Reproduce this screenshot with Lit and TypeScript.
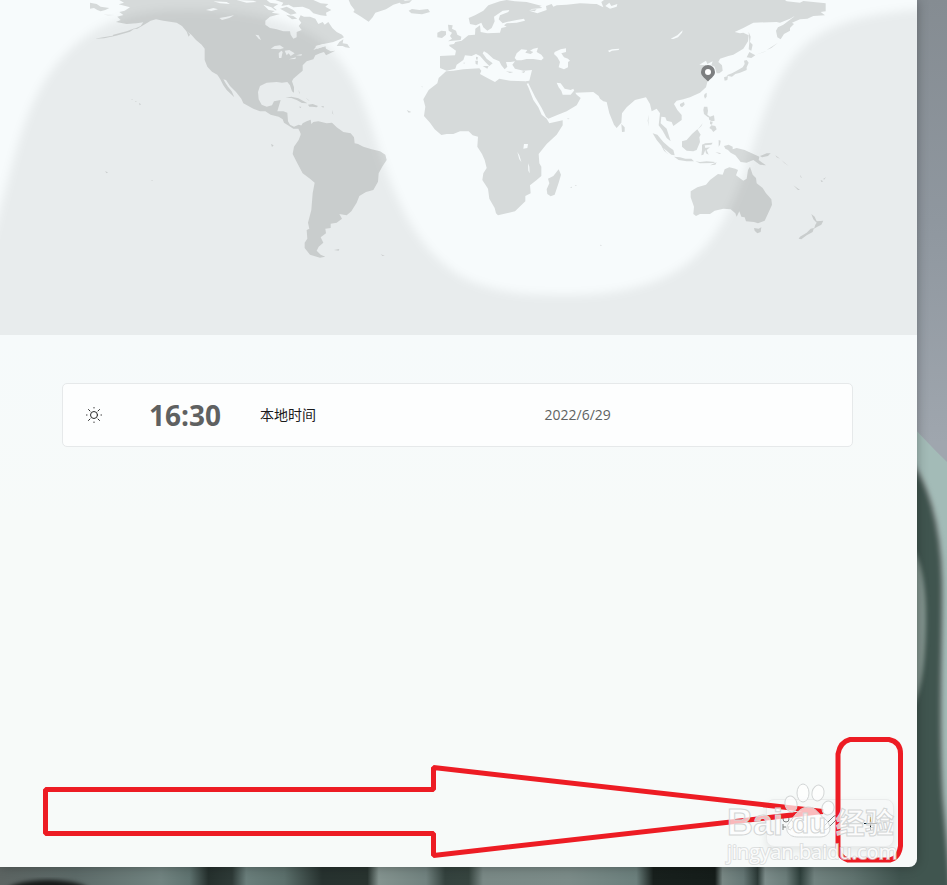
import { LitElement, html, css, svg } from "lit";
import { customElement, property } from "lit/decorators.js";

/* Coastlines of the western half, three units to a map pixel. */
const WEST = [
  // North America
  "M118 0 132 8 116 13 150 22 134 32 118 36 130 45 112 50 122 60 108 66 140 72 170 70 190 67 182 78 160 88 172 86 196 72 212 62 228 58 250 62 290 68 306 78 318 92 334 104 348 120 365 134 374 146 374 180 382 200 396 215 412 224 420 236 430 256 440 270 455 284 463 292 455 274 444 260 436 248 430 238 438 240 450 258 468 276 484 296 490 310 520 326 540 334 556 334 572 344 596 350 608 358 612 368 624 376 640 386 655 386 662 400 670 378 656 374 642 380 630 374 624 364 622 338 610 334 592 334 596 320 602 300 582 304 576 316 560 320 545 314 536 298 534 276 540 258 560 248 590 246 606 248 622 246 630 256 636 274 642 278 642 262 636 244 640 236 652 226 668 212 668 196 680 184 700 178 706 166 720 160 732 156 738 166 766 152 752 154 738 146 736 138 710 146 700 150 710 138 730 132 760 126 780 118 792 112 786 104 770 96 757 84 745 66 734 74 728 66 715 72 706 56 690 50 672 50 662 46 656 58 664 68 656 78 665 90 650 96 650 112 640 116 632 104 630 94 610 94 590 88 570 84 556 74 556 62 570 50 600 42 575 38 590 30 580 22 595 12 570 8 560 0Z",
  // Arctic archipelago
  "M586 0 700 0 722 10 745 12 736 20 754 30 738 38 740 48 722 46 700 40 688 28 668 20 640 22 626 14 604 18 610 8Z",
  "M600 26 620 20 640 30 650 40 632 44 618 36Z M618 44 640 48 652 56 636 58Z",
  // Siberian tip, Newfoundland, Greenland
  "M30 8 50 12 62 20 88 24 76 30 62 34 52 30 42 24 30 26Z M70 44 104 45 84 46Z",
  "M770 138 778 126 790 118 788 130 802 132 810 144 796 142 788 138Z",
  "M806 0 812 14 824 30 820 36 840 48 866 65 878 52 886 38 918 28 940 14 966 6 975 0Z",
  // Aleutians, Vancouver, Hawaii
  "M44 116 70 112 98 107 100 104 140 94 166 84 150 95 108 107 72 115Z M368 126 382 134 383 144 372 134Z M318 90 330 104 326 110Z",
  "M177 309 183 313 179 316Z M165 303 171 305 167 306Z M154 297 159 299 156 300Z M573 432 581 436 576 441Z M75 514 84 517 80 520Z M214 540 219 541 216 543Z",
  // Caribbean
  "M616 294 634 290 655 295 670 303 682 310 666 309 650 300 634 294Z M656 320 664 320 662 324Z M684 314 698 312 714 318 710 322 696 320 688 320Z M723 319 732 319 730 323Z M656 270 660 282 657 278Z M676 292 690 304 684 300Z M757 330 760 344 757 340Z",
  // South America
  "M660 384 668 370 680 364 692 359 694 372 700 366 715 364 740 370 756 368 770 382 790 396 812 400 822 412 824 430 834 432 850 440 875 448 900 454 916 464 920 480 908 498 896 520 894 545 880 570 858 576 838 588 830 608 814 634 800 646 778 642 786 656 770 668 752 671 752 684 736 686 738 700 722 712 730 728 716 740 710 752 722 764 736 770 720 773 690 764 674 744 674 728 682 716 680 690 688 686 684 668 694 630 698 580 704 548 690 536 668 520 652 490 638 462 642 440 656 420 662 404Z",
  "M762 750 778 747 776 752Z M902 763 914 767 908 768Z",
];

const WEST_LAKES =
  "M572 146 584 138 600 136 612 144 600 148Z M596 160 604 152 608 156 604 174 597 174Z M614 152 628 150 644 160 632 168 626 160 620 166Z M626 178 648 172 646 177Z M648 166 666 162 664 167Z M526 104 536 106 543 120 536 116Z M418 54 440 50 462 46 448 54 426 60Z M378 30 400 24 414 28 394 33Z M706 138 730 132 738 138 712 146Z M400 4 440 6 450 12 420 10Z M470 0 500 8 530 6 520 2Z M550 14 574 22 590 34 566 30Z";

/* Coastlines of the eastern half, same scale. */
const EAST = [
  // Eurasia
  "M120 168 165 166 168 152 148 138 148 134 162 132 166 126 185 122 205 106 225 104 226 86 240 76 242 96 262 100 300 98 304 84 320 80 312 76 320 70 350 68 375 62 372 56 350 60 320 66 308 70 296 58 300 46 325 36 328 30 308 32 282 50 284 64 275 84 262 92 250 82 244 68 228 76 210 72 206 54 225 46 250 32 265 16 300 4 320 0 345 4 380 6 426 18 426 24 395 27 388 32 412 40 440 30 438 18 455 12 460 20 470 16 500 14 540 10 590 12 610 22 604 6 612 0 1155 0 1160 4 1200 8 1210 3 1277 10 1277 34 1262 36 1275 46 1240 48 1222 56 1200 58 1176 68 1182 72 1170 84 1170 92 1152 102 1142 118 1132 112 1128 92 1134 82 1150 74 1180 52 1184 48 1170 56 1140 68 1130 66 1060 68 1030 84 1004 96 1020 100 1030 98 1046 106 1044 124 1030 146 1000 164 985 168 960 176 955 186 966 196 968 212 958 220 950 220 944 200 934 196 938 184 922 192 918 182 898 194 920 196 912 206 920 216 926 230 918 262 900 278 870 292 850 298 830 302 822 312 832 330 845 345 845 360 820 378 815 366 800 362 796 352 784 350 782 370 800 386 812 424 800 414 788 392 776 376 780 340 770 326 755 334 750 312 738 292 705 300 680 322 666 340 664 368 650 384 642 374 628 340 620 306 610 304 600 296 596 288 580 276 525 278 520 266 512 270 494 266 482 250 470 248 476 262 484 272 488 284 512 284 522 272 530 284 542 294 530 316 500 334 470 346 445 356 438 350 425 324 405 290 392 264 385 250 378 252 376 244 388 242 396 210 370 212 345 206 337 194 345 184 332 186 318 186 322 200 314 208 304 196 298 184 280 176 262 160 252 154 248 160 260 176 278 190 268 198 256 186 240 168 228 162 215 168 195 166 190 180 170 194 166 206 140 212 120 204Z",
  // Africa
  "M138 214 160 212 190 208 238 205 244 212 240 222 262 234 285 246 298 236 330 242 376 244 385 262 400 300 415 322 425 344 440 356 448 370 488 361 488 376 470 404 440 432 416 462 418 490 424 500 424 528 410 540 390 556 392 580 376 588 376 604 345 634 320 640 294 646 288 640 284 624 268 596 264 566 247 540 250 520 260 504 254 480 246 462 232 440 234 410 218 406 206 394 180 394 160 402 140 402 124 405 104 388 90 368 72 348 76 320 70 298 86 270 112 250 116 234Z",
  "M476 508 483 524 476 548 464 584 452 589 442 582 440 568 448 550 444 536 460 528Z",
  // British Isles, Iceland, Mediterranean islands
  "M144 74 158 76 156 86 168 92 172 104 184 110 182 120 144 124 156 116 150 108 156 98 146 92Z M112 98 124 92 138 94 138 104 126 114 112 112Z M26 32 36 27 58 30 84 27 90 36 66 43 34 40Z",
  "M228 170 234 172 232 180 228 178Z M226 182 234 182 233 194 227 192Z M248 198 266 198 262 206Z M318 214 340 216 330 219Z M364 216 376 212 372 219Z M190 188 196 188 192 191Z",
  "M0 3 16 2 36 0 28 8 6 13 0 10Z M380 30 410 28 404 34Z",
  // Ceylon, Sumatra, Java, Timor
  "M664 372 674 382 674 395 666 396Z M758 400 772 404 790 426 808 442 820 450 824 466 814 464 790 444 770 420Z M822 470 840 472 856 476 874 476 882 484 860 484 836 480Z M886 484 900 486 920 484 946 486 940 489 900 490Z M930 496 950 487 946 494Z M746 344 745 364 747 380 743 362Z M780 430 798 456 806 464 792 452Z",
  // Borneo, Sulawesi, Philippines, Moluccas
  "M846 424 860 420 876 402 892 388 902 404 898 412 900 426 890 450 880 454 860 452 846 440Z",
  "M906 434 916 430 938 428 934 434 914 436 916 444 930 442 920 450 926 464 918 460 916 450 910 464 904 466 906 450Z",
  "M912 320 922 320 924 332 922 344 930 350 924 352 912 342 910 330Z M934 376 946 378 950 388 940 396 934 388 928 384Z M926 352 942 346 944 362 936 364 928 360Z M892 390 908 370 904 378Z M930 364 938 366 936 374 930 372Z M956 420 962 422 960 434 956 440Z M946 456 964 460 958 462Z",
  // New Guinea and Melanesia
  "M972 438 986 434 998 440 998 448 1010 444 1034 450 1060 462 1078 470 1076 480 1098 496 1080 494 1060 480 1040 488 1022 486 1006 466 992 458 984 450 976 446Z M1080 468 1100 460 1112 460 1104 468 1086 472Z M1126 466 1140 476 1130 472Z M1144 480 1166 498 1154 490Z M1180 556 1200 570 1194 570Z M1262 540 1270 544 1264 546Z M1270 536 1278 532 1272 539Z M1200 524 1206 534 1202 532Z",
  // China coast, Japan, Sakhalin
  "M840 312 852 306 854 314 846 322 840 318Z M914 282 920 278 920 290 915 296 912 288Z M972 232 984 228 982 240 974 242Z M980 226 996 220 1010 212 1028 202 1034 192 1032 182 1040 180 1046 188 1040 202 1040 210 1020 218 1006 222 996 230 984 228Z M1040 172 1048 156 1066 166 1054 174Z M1046 96 1052 110 1050 126 1058 134 1054 152 1046 148 1048 126Z M1068 164 1100 152 1092 156Z M1100 150 1134 128 1114 144Z",
  // Australia and New Zealand
  "M872 574 892 562 918 554 930 540 954 522 968 524 974 508 988 502 1006 506 1014 510 1008 526 1030 542 1040 536 1044 510 1050 500 1058 524 1068 534 1070 550 1088 564 1098 580 1114 598 1116 614 1108 632 1094 662 1074 670 1062 666 1038 664 1034 652 1024 650 1018 634 1010 650 1006 640 992 628 970 626 944 632 930 642 900 642 888 648 880 642 882 620 872 592Z",
  "M1062 684 1076 686 1084 682 1082 696 1072 700 1064 692Z M1234 642 1244 650 1250 664 1270 662 1264 674 1252 680 1242 686 1246 674 1250 668 1240 658Z M1242 684 1238 696 1220 706 1204 718 1196 716 1200 710 1220 698 1232 686Z",
  "M510 562 516 560 515 564Z M524 556 530 555 528 558Z M600 734 606 736 602 738Z M500 356 509 355 505 358Z M64 258 70 262 66 261Z M20 330 34 336 26 338Z",
];

const EAST_LAKES =
  "M344 174 350 160 364 148 382 150 376 158 392 162 400 156 390 152 400 146 414 143 410 156 424 164 431 174 424 181 400 177 380 177 364 181 350 181Z M464 156 482 148 498 145 498 156 484 160 492 172 504 176 510 182 504 186 504 202 492 208 476 202 480 186 472 172 462 162Z M372 432 384 432 382 444 370 446Z M352 456 358 466 364 486 358 478Z M384 490 388 500 389 520 385 512Z M812 116 832 106 848 91 846 98 834 112 820 117Z M624 152 636 148 658 146 656 150 636 152 628 157Z M616 18 628 8 634 18 652 12 650 20 630 26Z M530 4 600 4 590 12 556 8Z M418 20 434 14 436 26Z";

@customElement("world-map")
class WorldMap extends LitElement {
  static styles = css`
    :host {
      display: block;
    }
    .map {
      display: block;
      width: 100%;
      height: auto;
    }
    .sea {
      fill: #f7fbfc;
    }
    .land {
      fill: #d6dada;
    }
    .night {
      fill: #000;
      fill-opacity: 0.06;
    }
    .pin {
      fill: #7d7f80;
    }
    .dot {
      fill: #fff;
    }
  `;

  render() {
    return html`<svg class="map" viewBox="0 0 917 335" role="img" aria-label="世界地图">
      <defs>
        <filter id="dusk" x="-10%" y="-10%" width="120%" height="120%" color-interpolation-filters="sRGB">
          <feGaussianBlur stdDeviation="5"></feGaussianBlur>
        </filter>
      </defs>
      <rect class="sea" width="917" height="335"></rect>
      <g transform="translate(80 0) scale(0.333333)">
        ${WEST.map((d) => svg`<path class="land" d=${d}></path>`)}
        <path class="sea" d=${WEST_LAKES}></path>
      </g>
      <g transform="translate(400 0) scale(0.333333)">
        ${EAST.map((d) => svg`<path class="land" d=${d}></path>`)}
        <path class="sea" d=${EAST_LAKES}></path>
      </g>
      <path
        class="night"
        filter="url(#dusk)"
        d="M-40 400V330C-10 260-5 225 8 180C24 118 40 66 92 32C125 12 160 10 190 10C245 11 290 18 322 42C362 76 368 120 386 170C404 218 424 254 462 277C496 294 530 295 566 295C606 295 650 289 682 267C716 244 734 205 747 165C762 118 774 72 808 42C840 18 885 9 960 8V400Z"
      ></path>
      <path class="pin" d="M708 65a7 7 0 0 1 7 7c0 3.500-3 5.500-7 9.500c-4-4-7-6-7-9.500a7 7 0 0 1 7-7Z"></path>
      <circle class="dot" cx="708" cy="72" r="3"></circle>
    </svg>`;
  }
}

@customElement("clock-card")
class ClockCard extends LitElement {
  @property() time = "";
  @property() place = "";
  @property() date = "";

  static styles = css`
    :host {
      display: grid;
      grid-template-columns: 86px 111px minmax(120px, 285fr) 308fr;
      align-items: center;
      box-sizing: border-box;
      height: 64px;
      border: 1px solid #e6e9ea;
      border-radius: 5px;
      background: #fdfefe;
      color: #1b1b1b;
      font-size: 14px;
      line-height: 20px;
    }
    .sun {
      width: 18px;
      height: 18px;
      margin-left: 22px;
      fill: none;
      stroke: #2a2a2a;
      stroke-linecap: round;
    }
    .time {
      font-size: 28px;
      line-height: 36px;
      font-weight: 700;
      color: #5f6161;
    }
    .date {
      color: #606262;
    }
  `;

  render() {
    return html`
      <svg class="sun" viewBox="0 0 18 18" aria-hidden="true">
        <circle cx="9" cy="9" r="3.500"></circle>
        <path d="M9 1.500v.5M9 16v.5M1.500 9h.5M16 9h.5M3.500 3.500l1.500 1.500M13 13l1.500 1.500M3.500 14.500l1.500-1.500M13 5l1.500-1.500"></path>
      </svg>
      <time class="time">${this.time}</time>
      <span>${this.place}</span>
      <span class="date">${this.date}</span>
    `;
  }
}

@customElement("app-root")
class AppRoot extends LitElement {
  static styles = css`
    :host {
      display: flex;
      position: relative;
      box-sizing: border-box;
      min-height: 100vh;
      padding: 0 30px 18px 0;
      overflow: hidden;
      font-family: "Open Sans", "Noto Sans", "Noto Sans CJK SC", sans-serif;
    }
    .wallpaper {
      position: absolute;
      inset: 0;
      width: 100%;
      height: 100%;
    }
    .window {
      position: relative;
      flex: 1;
      min-width: 0;
      display: flex;
      flex-direction: column;
      overflow: hidden;
      border-radius: 0 0 8px 0;
      background: linear-gradient(#f6fafb 340px, #f7faf9 520px);
    }
    .frame {
      position: relative;
      flex: 1;
      min-width: 0;
      display: flex;
      border-radius: 0 0 8px 0;
      box-shadow: 0 0 12px rgba(0, 0, 0, 0.3);
    }
    .card {
      margin: 48px 64px 0 62px;
    }
    .tools {
      display: flex;
      align-self: flex-end;
      margin: auto 23px 20px 0;
      padding: 3px;
      border: 1px solid #eaecec;
      border-radius: 8px;
      background: #f6f8f8;
      box-shadow: 0 4px 8px rgba(0, 0, 0, 0.08);
    }
    .tool {
      display: grid;
      place-items: center;
      width: 40px;
      height: 40px;
      padding: 0;
      border: 0;
      border-radius: 4px;
      background: none;
    }
    .glyph {
      width: 16px;
      height: 16px;
      fill: none;
      stroke: #202222;
    }
    .soft {
      stroke: #7f8282;
    }
    .overlay {
      position: absolute;
      left: 0;
      bottom: 0;
      width: 100%;
      height: auto;
      pointer-events: none;
    }
    .red {
      fill: none;
      stroke: #ed1c24;
      stroke-width: 5;
    }
    .mark {
      fill: #fff;
      fill-opacity: 0.7;
      stroke: #d2d5d5;
      stroke-width: 1;
    }
    .word {
      font-family: "Liberation Sans", "Noto Sans CJK SC", sans-serif;
      font-weight: 700;
      font-size: 36px;
    }
    .small {
      font-size: 28px;
    }
    .cjk {
      font-family: "Noto Sans CJK SC", sans-serif;
      font-size: 29px;
    }
    .site {
      font-size: 20px;
      fill-opacity: 0.9;
      stroke-width: 2;
      stroke-opacity: 0.7;
      paint-order: stroke;
    }
  `;

  render() {
    return html`
      <svg class="wallpaper" viewBox="0 0 947 885" preserveAspectRatio="none" aria-hidden="true">
        <defs>
          <linearGradient id="sky" x1="0" y1="0" x2="0" y2="1">
            <stop offset="0" stop-color="#858c92"></stop>
            <stop offset="0.25" stop-color="#8f979f"></stop>
            <stop offset="0.5" stop-color="#9fa6ae"></stop>
          </linearGradient>
          <linearGradient id="floor" gradientUnits="userSpaceOnUse" x1="0" y1="0" x2="947" y2="0">
            <stop offset="0" stop-color="#5c6462"></stop>
            <stop offset="0.08" stop-color="#5d6b69"></stop>
            <stop offset="0.17" stop-color="#718380"></stop>
            <stop offset="0.2" stop-color="#5f7370"></stop>
            <stop offset="0.22" stop-color="#25302d"></stop>
            <stop offset="0.245" stop-color="#2e3a37"></stop>
            <stop offset="0.26" stop-color="#6a7e7b"></stop>
            <stop offset="0.3" stop-color="#5c706c"></stop>
            <stop offset="0.34" stop-color="#27322f"></stop>
            <stop offset="0.388" stop-color="#28332f"></stop>
            <stop offset="0.4" stop-color="#84938f"></stop>
            <stop offset="0.45" stop-color="#71827f"></stop>
            <stop offset="0.47" stop-color="#34423e"></stop>
            <stop offset="0.495" stop-color="#36443f"></stop>
            <stop offset="0.51" stop-color="#7a8986"></stop>
            <stop offset="0.6" stop-color="#7b8b88"></stop>
            <stop offset="0.672" stop-color="#6b7f7c"></stop>
            <stop offset="0.69" stop-color="#18201d"></stop>
            <stop offset="0.755" stop-color="#151d1a"></stop>
            <stop offset="0.763" stop-color="#788784"></stop>
            <stop offset="0.785" stop-color="#657775"></stop>
            <stop offset="0.8" stop-color="#2c3a37"></stop>
            <stop offset="0.808" stop-color="#7c8c8a"></stop>
            <stop offset="0.83" stop-color="#6b7d7a"></stop>
            <stop offset="0.845" stop-color="#2f403c"></stop>
            <stop offset="0.86" stop-color="#71827f"></stop>
            <stop offset="0.9" stop-color="#60736f"></stop>
            <stop offset="0.95" stop-color="#40544f"></stop>
            <stop offset="1" stop-color="#42564f"></stop>
          </linearGradient>
          <filter id="fold" x="-50%" y="-10%" width="200%" height="120%" color-interpolation-filters="sRGB">
            <feGaussianBlur stdDeviation="2"></feGaussianBlur>
          </filter>
        </defs>
        <rect width="947" height="885" fill="url(#sky)"></rect>
        <rect y="862" width="947" height="23" fill="url(#floor)" transform="skewX(0)"></rect>
        <path d="M905 418C925 440 940 456 960 474V800L950 885H905Z" fill="#a3bbb7"></path>
        <path d="M905 455C928 478 941 525 942 580C943 640 938 720 943 800L952 900H905Z" fill="#40554f" stroke="#7b8583" stroke-width="3" filter="url(#fold)"></path>
        <path d="M905 540C922 552 927 590 926 625C925 670 921 700 905 720Z" fill="#83958f" filter="url(#fold)"></path>
        <rect y="862" width="917" height="23" fill="url(#floor)"></rect>
        <ellipse cx="48" cy="892" rx="42" ry="12" fill="#161a19" filter="url(#fold)"></ellipse>
      </svg>
      <div class="frame">
        <main class="window">
          <world-map></world-map>
          <clock-card class="card" time="16:30" place="本地时间" date="2022/6/29"></clock-card>
          <div class="tools" role="toolbar">
            <button class="tool" aria-label="排序">
              <svg class="glyph soft" viewBox="0 0 16 16">
                <circle cx="4" cy="4" r="3"></circle>
                <path d="M1 9v6M1 12h3M4 1h5"></path>
                <path d="M9 5a5 5 0 0 1 0 9M7 11l-1 3 3 1"></path>
              </svg>
            </button>
            <button class="tool" aria-label="编辑">
              <svg class="glyph soft" viewBox="0 0 16 16">
                <path d="M1 15l1-4L12 1q2-1 3 1t0 2L5 14Z"></path>
              </svg>
            </button>
            <button class="tool" aria-label="添加">
              <svg class="glyph" viewBox="0 0 16 16">
                <path d="M8.500 2v13M2 8.500h13"></path>
              </svg>
            </button>
          </div>
        </main>
      </div>
      <svg class="overlay" viewBox="0 735 947 150" aria-hidden="true">
        <path class="red" d="M45.500 789.500H433.500V767.500L823 811.500L433.500 855.500V833.500H45.500Z" stroke-linejoin="bevel"></path>
        <path class="red" d="M850 739.500H889Q901 742 900.500 755V846Q899 858 890 860H848Q838 857 838 846V754Q840 742 850 739.500Z"></path>
        <g class="mark">
          <ellipse cx="803" cy="793" rx="6" ry="9"></ellipse>
          <ellipse cx="818" cy="793" rx="6" ry="8" transform="rotate(12 818 793)"></ellipse>
          <ellipse cx="791" cy="804" rx="6" ry="8" transform="rotate(-15 791 804)"></ellipse>
          <ellipse cx="828" cy="808" rx="6" ry="7" transform="rotate(15 828 808)"></ellipse>
          <path d="M808 807C816 807 818 814 825 819C833 826 831 837 820 837C812 837 805 837 798 837C788 837 784 830 789 823C794 817 799 807 808 807Z"></path>
          <text class="word" x="727" y="835">Bai</text>
          <text class="word small" x="792" y="833">du</text>
          <text class="word cjk" x="836" y="834">经验</text>
          <text class="site" x="727" y="859">jingyan.baidu.com</text>
        </g>
      </svg>
    `;
  }
}
